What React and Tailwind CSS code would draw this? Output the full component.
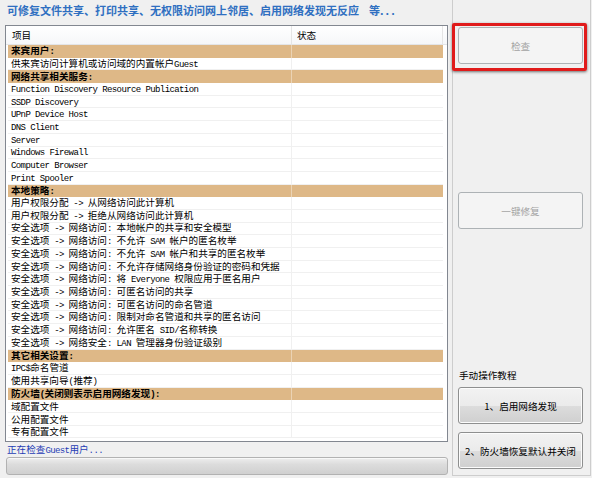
const ROWS = [
  ['来宾用户:', true],
  ['供来宾访问计算机或访问域的内置帐户Guest'],
  ['网络共享相关服务:', true],
  ['Function Discovery Resource Publication'],
  ['SSDP Discovery'],
  ['UPnP Device Host'],
  ['DNS Client'],
  ['Server'],
  ['Windows Firewall'],
  ['Computer Browser'],
  ['Print Spooler'],
  ['本地策略:', true],
  ['用户权限分配 -> 从网络访问此计算机'],
  ['用户权限分配 -> 拒绝从网络访问此计算机'],
  ['安全选项 -> 网络访问: 本地帐户的共享和安全模型'],
  ['安全选项 -> 网络访问: 不允许 SAM 帐户的匿名枚举'],
  ['安全选项 -> 网络访问: 不允许 SAM 帐户和共享的匿名枚举'],
  ['安全选项 -> 网络访问: 不允许存储网络身份验证的密码和凭据'],
  ['安全选项 -> 网络访问: 将 Everyone 权限应用于匿名用户'],
  ['安全选项 -> 网络访问: 可匿名访问的共享'],
  ['安全选项 -> 网络访问: 可匿名访问的命名管道'],
  ['安全选项 -> 网络访问: 限制对命名管道和共享的匿名访问'],
  ['安全选项 -> 网络访问: 允许匿名 SID/名称转换'],
  ['安全选项 -> 网络安全: LAN 管理器身份验证级别'],
  ['其它相关设置:', true],
  ['IPC$命名管道'],
  ['使用共享向导(推荐)'],
  ['防火墙(关闭则表示启用网络发现):', true],
  ['域配置文件'],
  ['公用配置文件'],
  ['专有配置文件'],
]

// ascii runs get the narrow mono font, like the half-width latin of SimSun
function Mixed({ text }) {
  return (
    <span>
      {text.split(/([\x20-\x7e]+)/).map((part, i) =>
        /^[\x20-\x7e]+$/.test(part) ? (
          <span key={i} className="font-['Liberation_Mono',monospace] text-[9px] tracking-[-0.6px]">{part}</span>
        ) : (
          part
        )
      )}
    </span>
  )
}

function Button({ children, disabled }) {
  if (disabled) {
    return (
      <div className="h-[37px] w-[125px] flex items-center justify-center rounded-[3px] border border-[#adb2b5] bg-[#f4f4f4] text-[#a3a3a3]">
        {children}
      </div>
    )
  }
  return (
    <div className="h-[37px] w-[125px] flex items-center justify-center rounded-[3px] border border-[#8e8f8f] bg-[linear-gradient(#f2f2f2,#ebebeb_50%,#dddddd_50%,#cfcfcf)] text-black shadow-[inset_0_0_0_1px_#fcfcfc]">
      {children}
    </div>
  )
}

export default function App() {
  return (
    <div className="relative w-[592px] h-[478px] bg-[#f0f0f0] flex overflow-hidden font-['Noto_Sans_CJK_SC',sans-serif] text-[9.6px] leading-[12px] text-black">
      {/* left side */}
      <div className="w-[452px] pl-[5px] flex flex-col">
        <div className="h-[25px] pt-[3px] pl-[2px] text-[11px] leading-[14px] font-bold text-[#2f6fc1] whitespace-pre">
          可修复文件共享、打印共享、无权限访问网上邻居、启用网络发现无反应    等<span className="tracking-[2px]">...</span>
        </div>

        <div className="w-[443px] h-[417px] border border-[#828790] bg-white p-[2px] pt-0">
          <div className="h-[19px] flex items-stretch bg-[linear-gradient(#ffffff,#f6f7f9)] border-b border-[#e3e5e8] -mx-[2px] px-[2px]">
            <div className="w-[284px] border-r border-[#e5e5e5] flex items-center pl-[4px]">项目</div>
            <div className="w-[151px] border-r border-[#e5e5e5] flex items-center pl-[5px]">状态</div>
          </div>
          {ROWS.map(([t, head], i) =>
            head ? (
              <div key={i} className="h-[12.7px] flex bg-[#deb887] font-bold whitespace-pre w-[435px]">
                <div className="w-[284px] border-r border-[#ebd3b4] flex items-center pl-[3px]">
                  <Mixed text={t} />
                </div>
                <div className="w-[151px]" />
              </div>
            ) : (
              <div key={i} className="h-[12.7px] flex whitespace-pre w-[435px] border-b border-[#f0f0f0]">
                <div className="w-[284px] border-r border-[#f0f0f0] flex items-center pl-[3px]">
                  <Mixed text={t} />
                </div>
                <div className="w-[151px]" />
              </div>
            )
          )}
        </div>

        <div className="h-[14px] flex items-center pl-[2px] mt-[1px] text-[#1f3cb4] whitespace-pre">
          <Mixed text="正在检查Guest用户..." />
        </div>
        <div className="w-[442px] h-[18px] ml-[1px] rounded-[3px] border border-[#b2b2b2] bg-[linear-gradient(#eeeeee,#dcdcdc_40%,#d0d0d0)] shadow-[inset_0_1px_0_#f8f8f8]" />
      </div>

      {/* right side */}
      <div className="w-[139px] h-[476px] border-l border-r border-b border-[#cdcdcd] flex flex-col pl-[5px]">
        <div className="mt-[27px]">
          <Button disabled>检查</Button>
        </div>
        <div className="mt-[128px]">
          <Button disabled>一键修复</Button>
        </div>
        <div className="mt-[139px] h-[14px] flex items-center pl-[1px]">手动操作教程</div>
        <div className="mt-[5px]">
          <Button>1、启用网络发现</Button>
        </div>
        <div className="mt-[8px]">
          <Button>2、防火墙恢复默认并关闭</Button>
        </div>
      </div>

      {/* red highlight drawn over the check button */}
      <div className="absolute left-[452px] top-[23px] w-[135px] h-[48px] border-[3px] border-[#e01b1b] rounded-[2px] shadow-[0_1px_3px_rgba(0,0,0,0.55)]" />
    </div>
  )
}
